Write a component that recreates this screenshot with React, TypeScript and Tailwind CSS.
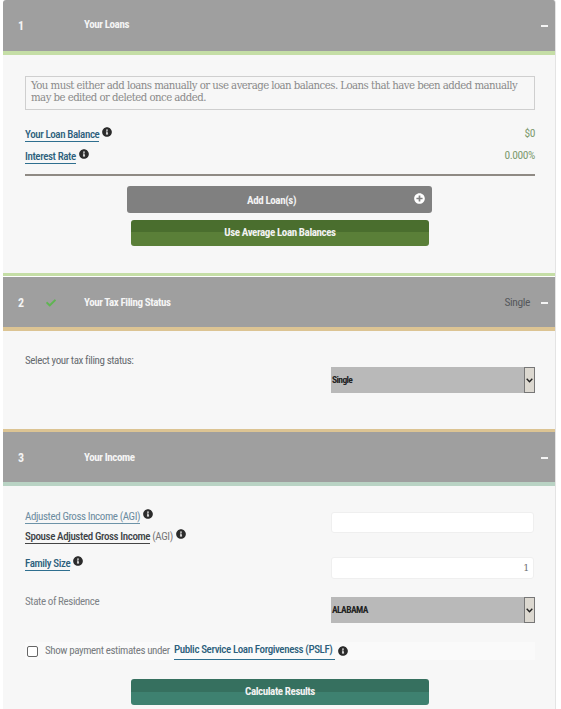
import React from 'react';
import { FaCheck, FaInfoCircle, FaPlusCircle } from 'react-icons/fa';

const narrow = "font-['Roboto_Condensed','Roboto',sans-serif] tracking-[-0.4px]";

const Header = ({ num, title, check, value, strip, first }: { num: string; title: string; check?: boolean; value?: string; strip: string; first?: boolean }) => (
  <>
    <div className={`flex items-center bg-[#9f9f9f] pr-[7px] text-[#f4f4f4] ${first ? 'h-[51px]' : 'h-[50px] pt-[2px]'} ${narrow}`}>
      <span className="w-[43px] pl-[15px] text-[12px] font-bold">{num}</span>
      <span className="w-[38px] text-[#5fb552]">{check && <FaCheck size={10} />}</span>
      <span className="flex-1 text-[11px] font-bold">{title}</span>
      {value && <span className="mr-[11px] text-[11.5px] text-[#55585c]">{value}</span>}
      <span className="h-[2px] w-[7px] bg-[#f4f4f4]" />
    </div>
    <div className={`h-[4px] ${strip}`} />
  </>
);

const Info = () => <FaInfoCircle size={10} className="ml-[3px] inline-block align-[1px] text-[#2b2b2b]" />;

const Select = ({ value, className }: { value: string; className: string }) => (
  <div className={`flex h-[26px] w-[204px] items-center justify-between bg-[#b9b9b9] ${className}`}>
    <span className="pl-[1px] text-[9.5px] font-bold tracking-[-0.6px] text-[#222]">{value}</span>
    <span className="flex h-[26px] w-[11px] items-center justify-center border border-[#777] bg-[#dcd8d0]">
      <svg width="7" height="5" viewBox="0 0 7 5" fill="none" stroke="#222" strokeWidth="1.4">
        <path d="M0.7 0.8 L3.5 3.8 L6.3 0.8" />
      </svg>
    </span>
  </div>
);

const Button = ({ children, className }: { children: React.ReactNode; className: string }) => (
  <div className={`flex w-[298px] items-center justify-center rounded-[3px] text-[11px] font-bold text-[#f2f2f2] ${className}`}>
    {children}
  </div>
);

const linkCls = 'border-b border-[#2f6f8f] font-medium text-[#2c5f7c]';

export default function App() {
  return (
    <div className={`h-[709px] w-[561px] overflow-hidden bg-white pl-[3px] pr-[5px] text-[11px] ${narrow}`}>
      <div className="overflow-hidden rounded-t-[3px] border-r border-[#e4e4e4]">
        <Header first num="1" title="Your Loans" strip="bg-[#c5dea6]" />
        <div className="h-[218px] bg-[#f7f7f7] pl-[22px] pr-[20px] pt-[21px]">
          <div className="h-[34px] border border-[#cfcfcf] px-[5px] py-[3px] font-['DejaVu_Serif',serif] text-[10.2px] leading-[11.5px] tracking-[-0.55px] text-[#8a8a8a]">
            You must either add loans manually or use average loan balances. Loans that have been added manually may be edited or deleted once added.
          </div>
          <div className="mt-[16px] flex h-[16px] items-center justify-between">
            <span className="leading-[13px]">
              <span className={linkCls}>Your Loan Balance</span>
              <Info />
            </span>
            <span className="text-[11.5px] text-[#7e9b6f]">$0</span>
          </div>
          <div className="mt-[6px] flex h-[16px] items-center justify-between">
            <span className="leading-[13px]">
              <span className={linkCls}>Interest Rate</span>
              <Info />
            </span>
            <span className="text-[11.5px] text-[#7e9b6f]">0.000%</span>
          </div>
          <div className="mt-[10px] h-[2px] bg-[#8f8a84]" />
          <div className="ml-[102px] mt-[10px] flex h-[27px] w-[305px] items-center rounded-[3px] bg-[#808080] pl-[120px] pr-[7px] text-[11px] font-bold text-[#f2f2f2]">
            <span className="flex-1 pt-[3px]">Add Loan(s)</span>
            <FaPlusCircle size={11} className="mb-[2px] text-white" />
          </div>
          <Button className="ml-[106px] mt-[7px] h-[26px] bg-[linear-gradient(#4a6e2e_0,#4a6e2e_45%,#5a7f38_45%,#5a7f38_100%)]">
            Use Average Loan Balances
          </Button>
        </div>
        <div className="h-[3px] bg-[#c5dea6]" />
        <div className="mt-px">
          <Header num="2" title="Your Tax Filing Status" check value="Single" strip="bg-[#dcc493]" />
        </div>
        <div className="flex h-[98px] items-start justify-between bg-[#f7f7f7] pl-[22px] pr-[20px] pt-[22px]">
          <span className="text-[#666b70]">Select your tax filing status:</span>
          <Select value="Single" className="mt-[14px]" />
        </div>
        <div className="h-[3px] bg-[#dcc493]" />
        <Header num="3" title="Your Income" strip="bg-[#b9d3c4]" />
        <div className="h-[223px] bg-[#f7f7f7] pl-[22px] pr-[20px] pt-[23px]">
          <div className="flex justify-between">
            <div className="leading-[13px]">
              <div className="h-[20px]">
                <span className="border-b border-[#6d93a8] text-[#6c8ca0]">Adjusted Gross Income (AGI)</span>
                <Info />
              </div>
              <div className="h-[27px]">
                <span className="border-b border-[#444] font-medium text-[#3c4246]">Spouse Adjusted Gross Income</span>
                <span className="text-[#777]"> (AGI)</span>
                <Info />
              </div>
              <div>
                <span className={linkCls}>Family Size</span>
                <Info />
              </div>
            </div>
            <div className="pr-px pt-[3px]">
              <div className="h-[21px] w-[203px] rounded-[3px] border border-[#efefef] bg-white" />
              <div className="mt-[24px] flex h-[22px] w-[203px] items-center justify-end rounded-[3px] border border-[#efefef] bg-white pr-[4px] font-['DejaVu_Serif',serif] text-[9.5px] text-[#707070]">
                1
              </div>
            </div>
          </div>
          <div className="mt-[18px] flex justify-between">
            <span className="-mt-[2px] leading-[13px] text-[#7d8286]">State of Residence</span>
            <Select value="ALABAMA" className="uppercase" />
          </div>
          <div className="mt-[19px] flex h-[18px] items-center bg-[#fafafa] pl-[2px] text-[#777b7e]">
            <span className="mr-[7px] h-[11px] w-[11px] rounded-[2px] border border-[#666] bg-white" />
            <span>Show payment estimates under&nbsp;&nbsp;</span>
            <span className={linkCls}>Public Service Loan Forgiveness (PSLF)&nbsp;</span>
            <Info />
          </div>
          <Button className="ml-[106px] mt-[19px] h-[26px] bg-[linear-gradient(#36705f_0,#36705f_50%,#3e8170_50%,#3e8170_100%)]">
            Calculate Results
          </Button>
        </div>
      </div>
    </div>
  );
}
